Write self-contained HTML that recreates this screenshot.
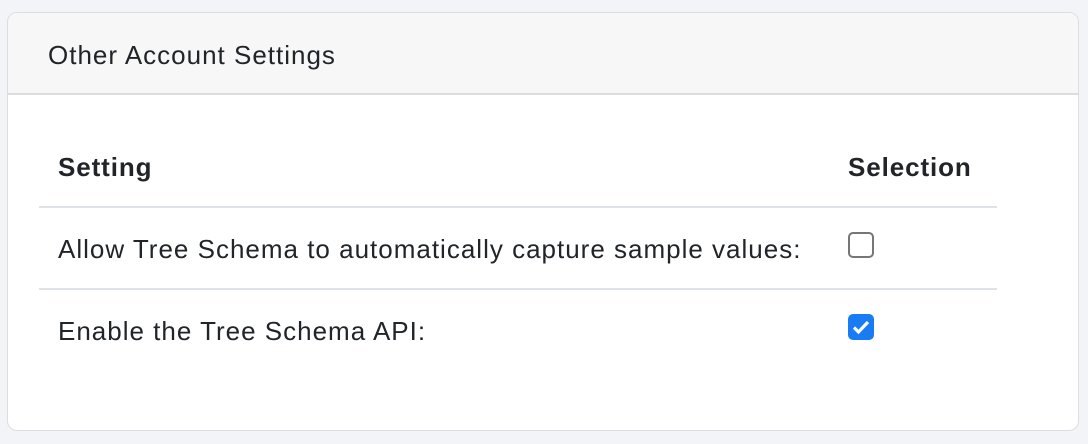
<!DOCTYPE html>
<html><head><style>
body{margin:0;background:#f3f4f8;font-family:"Liberation Sans",sans-serif;color:#212529;}
.card{position:absolute;left:7px;top:12px;width:1070px;height:417px;background:#fff;border:1px solid #dcdde0;border-radius:10px;overflow:hidden;}
.hd{height:82px;background:#f7f7f7;border-bottom:2px solid #dcdcdc;box-sizing:border-box;}
.t{position:absolute;font-size:26px;letter-spacing:1px;white-space:nowrap;line-height:1;}
.b{font-weight:bold;letter-spacing:0.9px;}
.line{position:absolute;left:31px;width:958px;height:2px;background:#dee2e6;}
.cb{position:absolute;left:840px;width:22px;height:22px;border:2px solid #767676;border-radius:5px;background:#fff;}
.cb.on{border-color:#1a7cf5;background:#1a7cf5;}
</style></head><body>
<div class="card">
<div class="hd"></div>
<div class="t" style="left:40px;top:29px">Other Account Settings</div>
<div class="t b" style="left:50px;top:141px">Setting</div>
<div class="t b" style="left:840px;top:141px">Selection</div>
<div class="line" style="top:193px"></div>
<div class="t" style="left:50px;top:223px">Allow Tree Schema to automatically capture sample values:</div>
<div class="cb" style="top:219px"></div>
<div class="line" style="top:275px"></div>
<div class="t" style="left:50px;top:305px">Enable the Tree Schema API:</div>
<div class="cb on" style="top:301px"><svg width="22" height="22" viewBox="0 0 22 22"><path d="M4 11.5l4.5 4.5L18 6" stroke="#fff" stroke-width="3.2" fill="none"/></svg></div>
</div>
</body></html>
